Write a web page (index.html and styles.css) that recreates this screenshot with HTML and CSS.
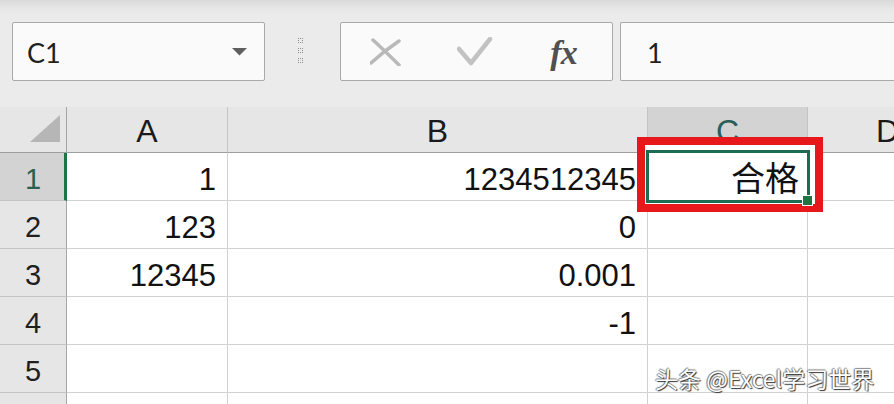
FILE: index.html
```html
<!DOCTYPE html>
<html lang="zh">
<head>
<meta charset="utf-8">
<title>Excel</title>
<link rel="stylesheet" href="styles.css">
</head>
<body>
<div class="toolbar">
  <div class="namebox">
    <span class="ref">C1</span>
    <svg class="arrow" width="15" height="8" viewBox="0 0 15 8"><path d="M0 0 H15 L7.5 7.5 Z" fill="#5f5f5f"/></svg>
  </div>
  <div class="grip"><i></i><i></i><i></i></div>
  <div class="fbtns">
    <span class="slot"><svg width="32" height="28" viewBox="0 0 32 28"><path d="M3 2 Q15 13 29 27" stroke="#b9b9b9" stroke-width="3.5" fill="none" stroke-linecap="round"/><path d="M29 3 Q14 13 1 25" stroke="#b9b9b9" stroke-width="3.5" fill="none" stroke-linecap="round"/></svg></span>
    <span class="slot"><svg width="36" height="30" viewBox="0 0 36 30"><polyline points="2,12 14,26 33,2" stroke="#c2c2c2" stroke-width="4.5" fill="none" stroke-linejoin="round" stroke-linecap="round"/></svg></span>
    <span class="slot"><span class="fx">fx</span></span>
  </div>
  <div class="finput">1</div>
</div>

<div class="sheet">
  <div class="hd corner"><span class="tri"></span></div>
  <div class="hd">A</div>
  <div class="hd">B</div>
  <div class="hd sel">C</div>
  <div class="hd">D</div>

  <div class="rh sel">1</div>
  <div class="c">1</div>
  <div class="c">1234512345</div>
  <div class="c"></div>
  <div class="c"></div>

  <div class="rh">2</div>
  <div class="c">123</div>
  <div class="c">0</div>
  <div class="c"></div>
  <div class="c"></div>

  <div class="rh">3</div>
  <div class="c">12345</div>
  <div class="c">0.001</div>
  <div class="c"></div>
  <div class="c"></div>

  <div class="rh">4</div>
  <div class="c"></div>
  <div class="c">-1</div>
  <div class="c"></div>
  <div class="c"></div>

  <div class="rh">5</div>
  <div class="c"></div>
  <div class="c"></div>
  <div class="c"></div>
  <div class="c"></div>

  <div class="rh"></div>
  <div class="c"></div>
  <div class="c"></div>
  <div class="c"></div>
  <div class="c"></div>
</div>

<div class="mark">
  <div class="active">合格</div>
  <span class="handle"></span>
</div>

<div class="watermark">头条 @Excel学习世界</div>
</body>
</html>
```
FILE: styles.css
```css
html, body {
  margin: 0;
  padding: 0;
}
body {
  width: 894px;
  height: 404px;
  overflow: hidden;
  position: relative;
  background: #ebebeb;
  font-family: "Liberation Sans", Arial, sans-serif;
}

.toolbar {
  height: 107px;
  box-sizing: border-box;
  padding: 22px 0 0 12px;
  display: flex;
  align-items: flex-start;
  background: linear-gradient(#dadada 0, #e6e6e6 8px, #ebebeb 14px);
}

.namebox {
  width: 253px;
  height: 59px;
  box-sizing: border-box;
  border: 1px solid #a9a9a9;
  border-radius: 2px;
  background: #fafafa;
  display: flex;
  align-items: center;
  padding: 2px 17px 0 14px;
}
.ref {
  flex: 1;
  font-family: Lato, "Open Sans", sans-serif;
  font-size: 27px;
  color: #1f1f1f;
}
.arrow {
  margin-top: -2px;
}

.grip {
  margin: 16px 0 0 33px;
  width: 7px;
  display: flex;
  flex-direction: column;
  gap: 5px;
}
.grip i {
  display: block;
  width: 5px;
  height: 5px;
  box-sizing: border-box;
  border: 1px dotted #8c8c8c;
  border-radius: 1px;
}

.fbtns {
  margin-left: 35px;
  width: 273px;
  height: 59px;
  box-sizing: border-box;
  border: 1px solid #a9a9a9;
  border-radius: 2px;
  background: #fafafa;
  display: flex;
  align-items: center;
}
.slot {
  width: 89px;
  display: flex;
  justify-content: center;
  align-items: center;
}
.fx {
  font-family: "Liberation Serif", "Times New Roman", serif;
  font-style: italic;
  font-weight: bold;
  font-size: 34px;
  color: #505050;
  letter-spacing: -1px;
  margin-top: 2px;
}

.finput {
  margin-left: 7px;
  flex: 1;
  height: 59px;
  box-sizing: border-box;
  border: 1px solid #a9a9a9;
  border-right: none;
  border-radius: 2px 0 0 2px;
  background: #fafafa;
  display: flex;
  align-items: center;
  padding: 2px 0 0 26px;
  font-family: Lato, "Open Sans", sans-serif;
  font-size: 27px;
  color: #1f1f1f;
}

.sheet {
  height: 297px;
  overflow: hidden;
  display: grid;
  grid-template-columns: 67px 161px 420px 160px 160px;
  grid-template-rows: 46px repeat(5, 48px) 48px;
  background: #fff;
}

.hd {
  background: #e6e6e6;
  border-right: 1px solid #c4c4c4;
  border-bottom: 1px solid #9e9e9e;
  box-sizing: border-box;
  display: flex;
  justify-content: center;
  align-items: flex-end;
  padding-bottom: 5px;
  font-size: 32px;
  line-height: 32px;
  color: #1a1a1a;
}
.hd.corner {
  border-right-color: #a6a6a6;
  justify-content: flex-end;
  align-items: flex-end;
  padding: 0 6px 10px 0;
}
.tri {
  width: 0;
  height: 0;
  border-left: 30px solid transparent;
  border-bottom: 27px solid #b6b6b6;
}
.hd.sel {
  background: #d3d3d3;
  color: #2a5e58;
}

.rh {
  background: #e6e6e6;
  border-right: 1px solid #a6a6a6;
  border-bottom: 1px solid #c4c4c4;
  box-sizing: border-box;
  display: flex;
  justify-content: center;
  align-items: flex-end;
  padding-bottom: 6px;
  font-size: 29px;
  line-height: 29px;
  color: #1f1f1f;
}
.rh.sel {
  background: #d3d3d3;
  color: #2b6153;
  border-right: 3px solid #217346;
  padding-left: 2px;
}

.c {
  border-right: 1px solid #d2d2d2;
  border-bottom: 1px solid #d2d2d2;
  box-sizing: border-box;
  display: flex;
  justify-content: flex-end;
  align-items: flex-end;
  padding: 0 11px 5px 0;
  font-size: 31px;
  line-height: 31px;
  color: #111;
  white-space: nowrap;
}

.mark {
  position: absolute;
  left: 637px;
  top: 137px;
  width: 186px;
  height: 75px;
  box-sizing: border-box;
  border: 8px solid #e8171c;
  background: #fff;
  padding: 5px 5px 1px 1px;
  display: flex;
}
.active {
  flex: 1;
  box-sizing: border-box;
  border: 3px solid #1e6b55;
  display: flex;
  justify-content: flex-end;
  align-items: center;
  padding: 0 8px 0 0;
  font-family: "Noto Sans CJK SC", "Noto Sans", sans-serif;
  font-size: 34px;
  color: #111;
}
.handle {
  position: absolute;
  left: 157px;
  top: 50px;
  width: 11px;
  height: 11px;
  box-sizing: border-box;
  border: 1px solid #fff;
  background: #217346;
}

.watermark {
  position: absolute;
  left: 655px;
  top: 367px;
  font-family: "Noto Sans CJK SC", "Liberation Sans", sans-serif;
  font-size: 23px;
  line-height: 1;
  color: #ffffff;
  text-shadow: 1px 1px 1px #333, -1px 0 1px #777, 0 -1px 1px #888;
  white-space: nowrap;
}
```
